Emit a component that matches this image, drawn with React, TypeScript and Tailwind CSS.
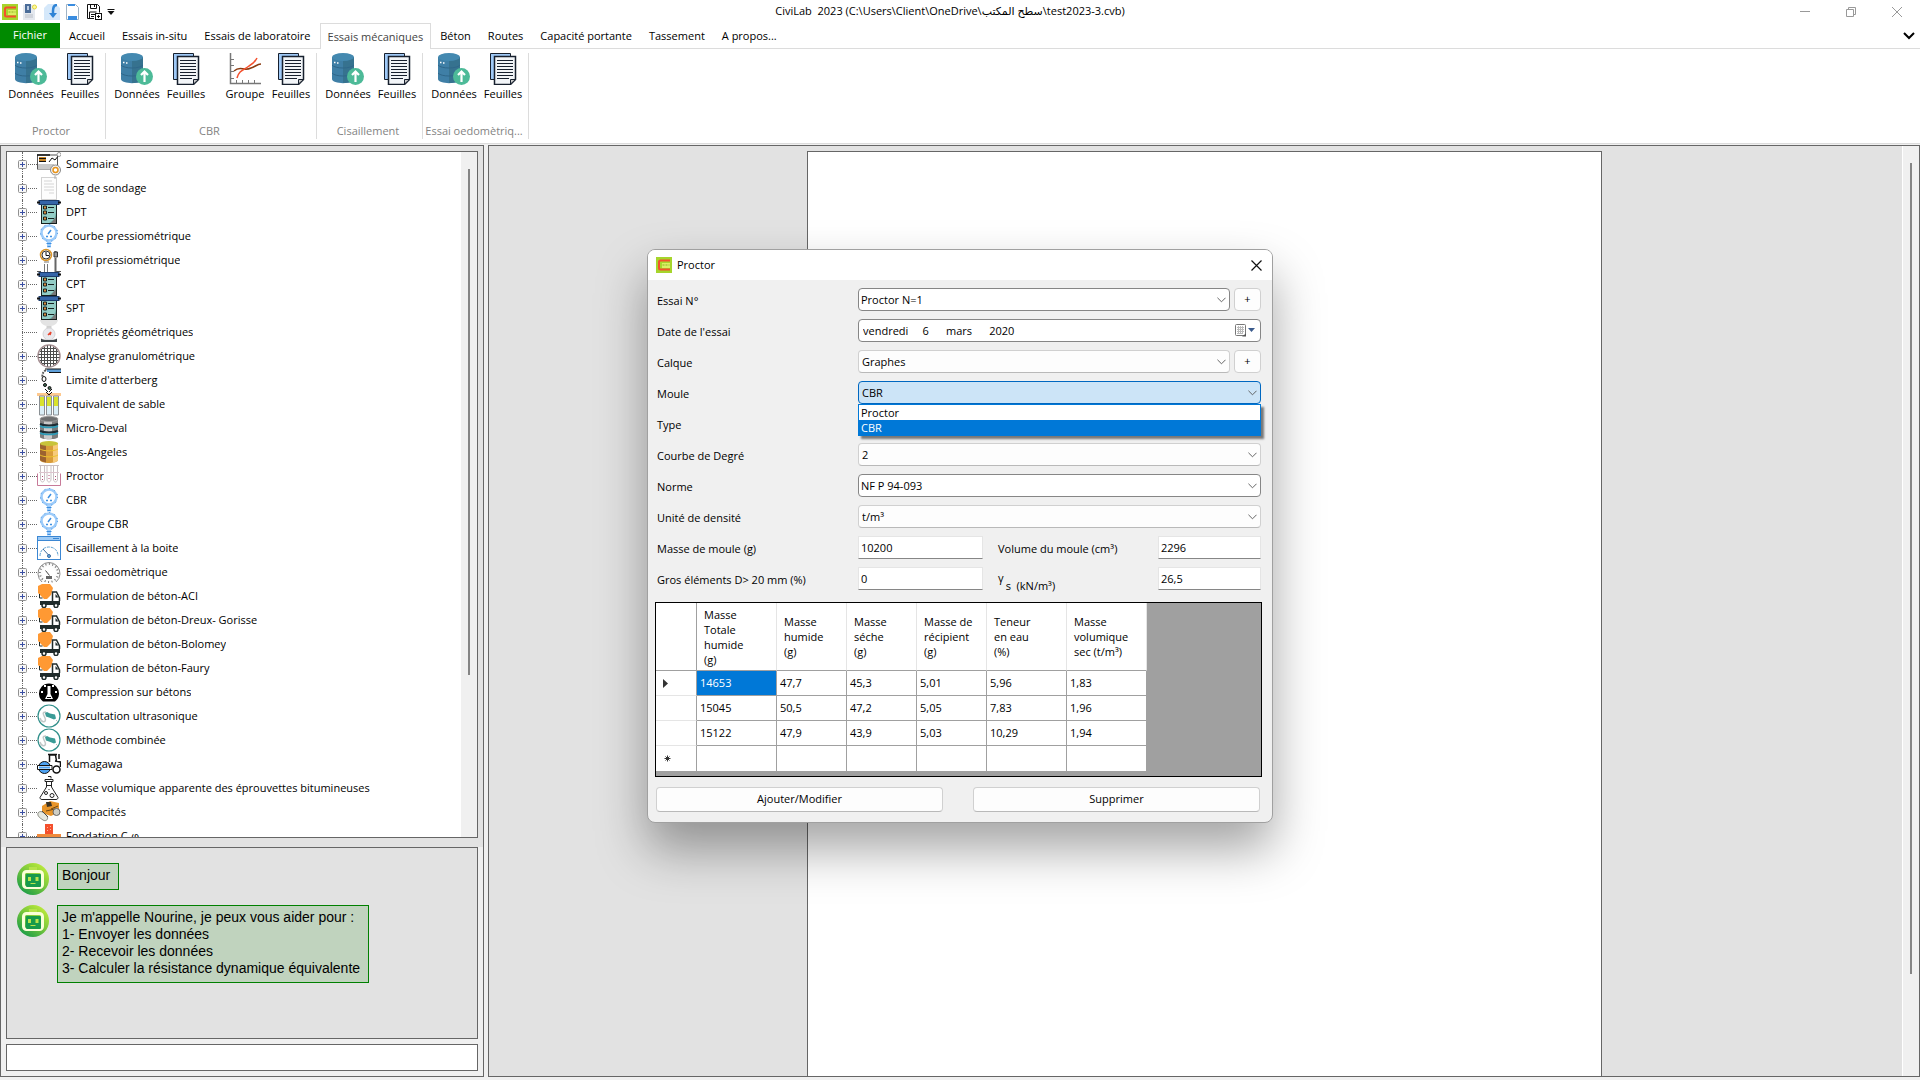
import { useState } from "react";
import type { ReactElement, ReactNode } from "react";

type IconName =
  | "summary"
  | "log"
  | "probe"
  | "gauge"
  | "profile"
  | "scale"
  | "sieve"
  | "tap"
  | "tubes"
  | "drum"
  | "barrel"
  | "rack"
  | "window"
  | "dial"
  | "truck"
  | "press"
  | "ultrasonic"
  | "roller"
  | "flask"
  | "compactor"
  | "footing";

interface TreeEntry {
  label: string;
  icon: IconName;
  leaf?: boolean;
}

const TREE: TreeEntry[] = [
  { label: "Sommaire", icon: "summary" },
  { label: "Log de sondage", icon: "log" },
  { label: "DPT", icon: "probe" },
  { label: "Courbe pressiométrique", icon: "gauge" },
  { label: "Profil pressiométrique", icon: "profile" },
  { label: "CPT", icon: "probe" },
  { label: "SPT", icon: "probe" },
  { label: "Propriétés géométriques", icon: "scale", leaf: true },
  { label: "Analyse granulométrique", icon: "sieve" },
  { label: "Limite d'atterberg", icon: "tap" },
  { label: "Equivalent de sable", icon: "tubes" },
  { label: "Micro-Deval", icon: "drum" },
  { label: "Los-Angeles", icon: "barrel" },
  { label: "Proctor", icon: "rack" },
  { label: "CBR", icon: "gauge" },
  { label: "Groupe CBR", icon: "gauge" },
  { label: "Cisaillement à la boite", icon: "window" },
  { label: "Essai oedomètrique", icon: "dial" },
  { label: "Formulation de béton-ACI", icon: "truck" },
  { label: "Formulation de béton-Dreux- Gorisse", icon: "truck" },
  { label: "Formulation de béton-Bolomey", icon: "truck" },
  { label: "Formulation de béton-Faury", icon: "truck" },
  { label: "Compression sur bétons", icon: "press" },
  { label: "Auscultation ultrasonique", icon: "ultrasonic" },
  { label: "Méthode combinée", icon: "ultrasonic" },
  { label: "Kumagawa", icon: "roller" },
  { label: "Masse volumique apparente des éprouvettes bitumineuses", icon: "flask" },
  { label: "Compacités", icon: "compactor" },
  { label: "Fondation C-φ", icon: "footing" },
];

const TABS = [
  "Accueil",
  "Essais in-situ",
  "Essais de laboratoire",
  "Essais mécaniques",
  "Béton",
  "Routes",
  "Capacité portante",
  "Tassement",
  "A propos...",
];

const COLUMNS = [
  "Masse\nTotale\nhumide\n(g)",
  "Masse\nhumide\n(g)",
  "Masse\nséche\n(g)",
  "Masse de\nrécipient\n(g)",
  "Teneur\nen eau\n(%)",
  "Masse\nvolumique\nsec (t/m³)",
];

const ROWS = [
  ["14653", "47,7", "45,3", "5,01", "5,96", "1,83"],
  ["15045", "50,5", "47,2", "5,05", "7,83", "1,96"],
  ["15122", "47,9", "43,9", "5,03", "10,29", "1,94"],
];

const ICONS: Record<IconName, ReactNode> = {
  summary: (
    <>
      <rect x="0.5" y="3" width="20" height="14" fill="#fff" stroke="#555" />
      <path d="M0 3h13" stroke="#111" strokeWidth="1.5" />
      <path d="M2 5h7v5h-7z" fill="#c98524" />
      <path d="M2 6.5h7M2 9.5h7" stroke="#111" />
      <path d="M1 12h16v5h-16z" fill="#c9c9c9" />
      <path d="M12 10l3-4 3 2 4-5" fill="none" stroke="#111" />
      <circle cx="22" cy="2.500" r="2" fill="#fff" stroke="#999" />
      <circle cx="18.500" cy="18" r="5" fill="#f3f3f3" stroke="#888" />
      <circle cx="18.500" cy="18" r="2.500" fill="#fff" stroke="#e8941a" strokeWidth="1.500" />
    </>
  ),
  log: (
    <>
      <rect x="4.500" y="1.500" width="15" height="22" fill="#fdfdfd" stroke="#d2d2d2" />
      <path d="M7 5h8M7 8h10M7 11h10M7 14h10M12 17h5" stroke="#d5d5d5" />
      <path d="M18 0v3" stroke="#aaa" />
    </>
  ),
  probe: (
    <>
      <rect x="4.500" y="4" width="15" height="19.500" fill="#93cdc6" stroke="#16201f" />
      <path d="M12 23c6-3 7-8 7-13v13z" fill="#68a9a2" />
      <path d="M14 23h5v-6z" fill="#777" />
      <rect x="2" y="0.500" width="20" height="4" fill="#3565a8" stroke="#1d3d6e" />
      <path d="M0 2.500h3M21 2.500h3" stroke="#111" strokeWidth="2" />
      <path d="M11 7.500h6M11 12.500h6M11 18.500h6" stroke="#16201f" />
      <path d="M6.500 6h3v3h-3zM6.500 11h3v3h-3zM6.500 17h3v3h-3z" fill="#d98b3d" stroke="#16201f" />
    </>
  ),
  gauge: (
    <>
      <circle cx="12" cy="9" r="7.500" fill="#fff" stroke="#9ccbfa" strokeWidth="2.500" />
      <circle cx="12" cy="9" r="8.500" fill="none" stroke="#3d8fe0" strokeDasharray="1 4" />
      <path d="M11 10l3-4M9 12.500h2M13 12.500h2" stroke="#3d8fe0" strokeWidth="1.500" />
      <path d="M12 17.500v6" stroke="#9ccbfa" strokeWidth="4" />
      <path d="M9.500 19.500h5M10.500 22.500h3" stroke="#3d8fe0" />
    </>
  ),
  profile: (
    <>
      <circle cx="9" cy="7" r="5.500" fill="#fff" stroke="#d99428" strokeWidth="1.500" />
      <circle cx="9" cy="7" r="4" fill="none" stroke="#333" />
      <path d="M9 4v3.500h3" fill="none" stroke="#111" />
      <path d="M7 14h5M7.500 16v8M10.500 16v8" stroke="#777" />
      <path d="M18.500 3v4M18.500 10v14" stroke="#666" strokeWidth="2" />
      <path d="M17 4h3.500v5h-3.500z" fill="#999" stroke="#333" />
      <path d="M0 23.500h4M19 23.500h5" stroke="#555" />
    </>
  ),
  scale: (
    <>
      <path d="M3 0h18c-1 4-4 6-9 6s-8-2-9-6z" fill="#e3e3e3" />
      <path d="M9.500 6h5v3h-5z" fill="#cfcfcf" />
      <circle cx="12" cy="14" r="6" fill="#e9e9ed" stroke="#d5d5d8" />
      <path d="M11 15l3-3M13 15l1-3" stroke="#e8442e" strokeWidth="1.500" />
      <path d="M4 18.500c3 2 13 2 16 0v3.500h-16z" fill="#3d4247" />
    </>
  ),
  sieve: (
    <>
      <circle cx="12" cy="12" r="11" fill="#fff" stroke="#a58f92" strokeWidth="1.500" />
      <path d="M4.500 5v14M7.500 3v18M10.500 1.500v21M13.500 1.500v21M16.500 3v18M19.500 5v14M5 4.500h14M3 7.500h18M1.500 10.500h21M1.500 13.500h21M3 16.500h18M5 19.500h14" stroke="#4d4d4d" />
    </>
  ),
  tap: (
    <>
      <path d="M10 2.500h14" stroke="#5f9fd8" strokeWidth="3" />
      <path d="M8 1h16M12 4.500h12" stroke="#111" />
      <path d="M9 2c-3 2-4 4-3.500 7" fill="none" stroke="#555" strokeWidth="2" strokeDasharray="2 1" />
      <ellipse cx="7" cy="11" rx="2" ry="2.500" fill="#fff" stroke="#111" />
      <circle cx="8" cy="17" r="1.500" fill="#3f6b52" stroke="#111" />
      <circle cx="12.500" cy="20" r="1.500" fill="#3f6b52" stroke="#111" />
      <path d="M8 21l3 3M12 24l3-3" stroke="#111" />
    </>
  ),
  tubes: (
    <>
      <path d="M0 1h24v3h-24z" fill="#ffc98e" />
      <path d="M2.500 4v19h5v-19zM9.500 4v19h5v-19zM16.500 4v19h5v-19z" fill="#d9eef7" stroke="#8a9094" />
      <path d="M3 5h4v9h-4zM10 5h4v9h-4zM17 5h4v9h-4z" fill="#d8e22c" />
      <path d="M9 0l3 3 3-3" fill="none" stroke="#111" />
    </>
  ),
  drum: (
    <>
      <path d="M3 3v18c0 3 18 3 18 0v-18z" fill="#7d7d7d" />
      <path d="M7 3v19.500c3 1 6 1 8 0v-19.500z" fill="#c9c9c9" />
      <ellipse cx="12" cy="3" rx="9" ry="2.500" fill="#6d6f70" stroke="#999" />
      <path d="M3 8c4 2 14 2 18 0M3 15c4 2 14 2 18 0" fill="none" stroke="#1f2c33" strokeWidth="2" />
      <path d="M3 10c4 2 14 2 18 0M3 17c4 2 14 2 18 0" fill="none" stroke="#2d9cb8" strokeWidth="1.500" />
    </>
  ),
  barrel: (
    <>
      <path d="M3 3v17c0 4 18 4 18 0v-17z" fill="#d99c3a" />
      <path d="M3 3v17c1 1 3 2 6 2.500v-19.500z" fill="#9c6330" />
      <path d="M16 4v18.500c3-.5 5-1.500 5-2.500v-17z" fill="#f7cb7b" />
      <ellipse cx="12" cy="3.500" rx="9" ry="2.500" fill="#c8c33a" />
      <path d="M3 9c4 2.500 14 2.500 18 0M3 15c4 2.500 14 2.500 18 0" fill="none" stroke="#ecc32e" />
    </>
  ),
  rack: (
    <>
      <path d="M3.500 1v14c0 4 4 4 4 0v-14M10 1v14c0 4 4 4 4 0v-14M16.500 1v14c0 4 4 4 4 0v-14M2 1.500h20" fill="none" stroke="#c9c0c4" />
      <path d="M2 8.500h20" stroke="#dcc3cd" />
      <path d="M0.500 9.500v12h23v-12" fill="none" stroke="#c77a99" />
      <path d="M5.500 12v4M12 11v4M18.500 12v4" stroke="#b34d76" strokeDasharray="1 2" />
    </>
  ),
  window: (
    <>
      <rect x="0.500" y="0.500" width="23" height="23" fill="#fff" stroke="#3b87d3" />
      <path d="M1 1h22v4h-22z" fill="#9fcbf5" />
      <path d="M1 4.500h22M16 2.500h6" stroke="#3b87d3" />
      <path d="M3 20c0-12 18-12 18 0" fill="none" stroke="#5b9ecf" strokeDasharray="3 1" />
      <path d="M6 13l6 6.500" stroke="#3b6b9e" />
      <circle cx="12" cy="20" r="1.500" fill="#6aaee8" stroke="#3b6b9e" />
    </>
  ),
  dial: (
    <>
      <path d="M5 22a11 11 0 1 1 14 0" fill="#fbfbfb" stroke="#8a8a8a" />
      <circle cx="12" cy="13" r="9" fill="none" stroke="#777" strokeWidth="2" strokeDasharray="1 2.500" />
      <circle cx="12" cy="13" r="6.500" fill="#fff" />
      <path d="M8.500 10.500l4 5" stroke="#444" />
      <path d="M9 16h6v3h-6z" fill="#666" />
    </>
  ),
  truck: (
    <>
      <path d="M1 2l4-2h8l3 4-2 7-4 4h-3l-6-6z" fill="#ff9933" />
      <path d="M2.500 10v4h3" fill="none" stroke="#1f2b2b" />
      <path d="M3 17h20v4h-20z" fill="#1f2b2b" />
      <path d="M15.500 17v-9h4l3 6v3" fill="#fff" stroke="#1f2b2b" strokeWidth="1.500" />
      <path d="M18.500 10v3.500h3z" fill="#1f2b2b" />
      <circle cx="7" cy="21.500" r="2" fill="#fff" stroke="#1f2b2b" strokeWidth="1.500" />
      <circle cx="19" cy="21.500" r="2" fill="#fff" stroke="#1f2b2b" strokeWidth="1.500" />
    </>
  ),
  press: (
    <>
      <path d="M6 21.500a10 10 0 1 1 12 0z" fill="#000" />
      <path d="M10.500 6h3v8l2.500 5h-8l2.500-5z" fill="#fff" />
      <path d="M7 5h2v2h-2zM15 5h2v2h-2zM4 11h2v2h-2zM18 11h2v2h-2z" fill="#fff" />
      <path d="M10 17.500h4" stroke="#000" />
    </>
  ),
  ultrasonic: (
    <>
      <circle cx="12" cy="12" r="11" fill="#fff" stroke="#2f8f8a" strokeWidth="1.200" />
      <path d="M3 14c2 6 7 4 5 0s-3-6 1-6" fill="none" stroke="#c2c8c8" strokeWidth="1.500" />
      <path d="M8 9l2-1 3 1.500 5 1 1 4-2 1-5-2-3-1z" fill="#3a9b96" />
      <path d="M19 16l2 2" stroke="#bbb" />
    </>
  ),
  roller: (
    <>
      <circle cx="7.500" cy="15.500" r="6" fill="#4da2f2" stroke="#111" />
      <path d="M0.500 13.500h14.500v4h-14.500z" fill="#fff" stroke="#111" />
      <path d="M2 15.500h11" stroke="#4da2f2" strokeWidth="2" />
      <path d="M12.500 10v-7h6l1 6M18 9l5.500 1v5M11 2.500h9" fill="none" stroke="#111" strokeWidth="1.500" />
      <path d="M22 2v5" stroke="#111" strokeWidth="1.500" />
      <circle cx="19.500" cy="17.500" r="3.500" fill="#fff" stroke="#111" strokeWidth="1.500" />
    </>
  ),
  flask: (
    <>
      <path d="M11 0.500h3v2M8 3.500h8v2h-8zM9.500 6v5l-6.500 10.500c0 1 .5 2 2 2h14c1.500 0 2-1 2-2l-6.500-10.500v-5" fill="none" stroke="#222" />
      <circle cx="9" cy="17" r="1.500" fill="none" stroke="#222" />
      <circle cx="15" cy="19.500" r="2" fill="none" stroke="#222" />
      <path d="M9 9.500h6M12 13v1" stroke="#222" />
    </>
  ),
  compactor: (
    <>
      <path d="M5 6l8-5 9 2v9l-8 4-9-3z" fill="#e8952a" />
      <path d="M9 2l5 0 1 4-5 1z" fill="#3a3326" />
      <path d="M14 9l7-3M9 11l9-2" stroke="#6b4511" />
      <circle cx="19.500" cy="12" r="3.500" fill="#cfcfc6" stroke="#666" />
      <path d="M1 13c2-3 6-1 9 3 2 3-1 6-4 4s-6-4-5-7z" fill="#e6e8e0" stroke="#8d8f87" />
      <path d="M5 11l6 6" stroke="#4b4b45" />
    </>
  ),
  footing: (
    <>
      <path d="M8 0h8v10h-8z" fill="#f4502d" />
      <path d="M0 10h24v4h-24z" fill="#f08a3c" />
      <path d="M10.500 3v6M13.500 2v6" stroke="#ffb199" strokeDasharray="1 2" />
    </>
  ),
};

const LogoIcon = ({ className }: { className: string }): ReactElement => (
  <svg viewBox="0 0 16 16" className={className} aria-hidden="true">
    <rect width="16" height="16" fill="#a6d52c" />
    <path d="M6 6h8v5h-8z" fill="#d9ef63" />
    <path d="M14 3.500h-9.500c-1 0-1.500.5-1.500 1.500v6c0 1 .5 1.500 1.500 1.500h9.500" fill="none" stroke="#f4502d" strokeWidth="2" />
    <path d="M6.500 8h7" stroke="#b5cf45" strokeDasharray="2 1" strokeWidth="2" />
  </svg>
);

const DataIcon = (): ReactElement => (
  <svg viewBox="0 0 32 32" className="size-8" aria-hidden="true">
    <path d="M0 4v22c0 5.500 22 5.500 22 0v-22z" fill="#3f7fa6" />
    <path d="M11 7v23c6 0 11-1.500 11-4v-22z" fill="#36728f" />
    <ellipse cx="11" cy="4" rx="11" ry="4" fill="#4489b0" />
    <path d="M0 12c3 4 19 4 22 0M0 20c3 4 19 4 22 0" fill="none" stroke="#2f678a" />
    <path d="M2 9.500h1.500M5 10h1.500" stroke="#fff" strokeWidth="1.500" />
    <circle cx="23.500" cy="23.500" r="8.500" fill="#4dba98" />
    <path d="M23.500 29v-9M20 22l3.500-3.500 3.500 3.500" fill="none" stroke="#fff" strokeWidth="2.200" />
  </svg>
);

const SheetsIcon = (): ReactElement => (
  <svg viewBox="0 0 32 32" className="size-8" aria-hidden="true">
    <path d="M3.500 0.500h20v26h-20z" fill="#9fc9f7" stroke="#17202e" />
    <path d="M7.500 3.500h21v23l-5 5h-16z" fill="#f2f5f8" stroke="#17202e" strokeWidth="1.500" />
    <path d="M10 7.500h16M10 10.500h16M10 13.500h16M10 16.500h16M10 19.500h16M10 22.500h16M10 25.500h12" stroke="#17202e" strokeWidth="1.200" />
    <path d="M23.500 31v-4.500h5z" fill="#ccc" stroke="#17202e" />
  </svg>
);

const CurvesIcon = (): ReactElement => (
  <svg viewBox="0 0 32 32" className="size-8" aria-hidden="true">
    <path d="M1.500 0v30.500h30.500" fill="none" stroke="#777" strokeWidth="1.500" />
    <path d="M2 6.500h3M2 12.500h3M2 18.500h3M2 25.500h3M7.500 30v-3M13.500 30v-3M19.500 30v-3M25.500 30v-3" stroke="#777" />
    <path d="M5 18c7-6 9 1 17-3 4-1 6-4 10-4" fill="none" stroke="#8a3a10" strokeWidth="1.500" />
    <path d="M8 25c2-8 7-8 12-12 4-2 6-4 8-8" fill="none" stroke="#f4502d" strokeWidth="1.500" />
  </svg>
);

const BotIcon = (): ReactElement => (
  <svg viewBox="0 0 32 32" className="size-8 shrink-0" aria-hidden="true">
    <defs>
      <linearGradient id="bot" x1="1" y1="0" x2="0.200" y2="1">
        <stop offset="0" stopColor="#d2f53c" />
        <stop offset="0.500" stopColor="#7cc93a" />
        <stop offset="1" stopColor="#159a48" />
      </linearGradient>
    </defs>
    <circle cx="16" cy="16" r="16" fill="url(#bot)" />
    <path d="M12 4h8v3h-8z" fill="#b6e34a" />
    <rect x="6.500" y="8.500" width="19" height="16" rx="3" fill="none" stroke="#fbffd8" strokeWidth="3" />
    <rect x="9" y="11" width="15" height="13" rx="1" fill="#179a4b" />
    <path d="M11 14h3v4h-3zM18.500 14h3v4h-3z" fill="#b8e34b" />
    <path d="M13.500 20.500h5" stroke="#b8e34b" />
  </svg>
);

const Chevron = (): ReactElement => (
  <svg viewBox="0 0 10 6" className="pointer-events-none absolute top-[9px] right-1 h-[6px] w-[9px]" aria-hidden="true">
    <path d="M0.500 0.500l4.500 4.500 4.500-4.500" fill="none" stroke="#555" />
  </svg>
);

const FIELD = "h-[23px] w-full appearance-none rounded-sm border leading-5 outline-none";

function Combo({ id, value, tone = "light" }: { id: string; value: string; tone?: "light" | "edit" | "open" }): ReactElement {
  const tones = {
    light: "border-[#d0d0d0] border-b-[#b9b9b9] bg-[#fdfdfd] px-[3px]",
    edit: "border-[#868686] bg-white px-[2px]",
    open: "border-[#0067c0] bg-[#cce4f7] px-[3px]",
  };
  return (
    <div className="relative min-w-0 flex-1">
      <select id={id} className={`${FIELD} ${tones[tone]}`} defaultValue={value}>
        <option>{value}</option>
      </select>
      <Chevron />
    </div>
  );
}

function Row({ id, label, children }: { id: string; label: string; children: ReactNode }): ReactElement {
  return (
    <div className="flex h-[31px] items-start">
      <label htmlFor={id} className="w-[201px] shrink-0 leading-[25px]">
        {label}
      </label>
      <div className="relative flex min-w-0 flex-1 gap-1">{children}</div>
    </div>
  );
}

const AddButton = ({ label }: { label: string }): ReactElement => (
  <button type="button" aria-label={label} className="h-[23px] w-[27px] rounded border border-[#d0d0d0] bg-[#fdfdfd]">
    +
  </button>
);

const TEXTBOX = "h-[23px] border border-[#e5e5e5] border-b-[#868686] bg-white px-[2px] outline-none";

function ProctorDialog(): ReactElement {
  const [moule, setMoule] = useState("CBR");

  return (
    <section
      role="dialog"
      aria-label="Proctor"
      className="absolute top-[249px] left-1/2 w-[626px] -translate-x-1/2 overflow-hidden rounded-lg border border-[#a0a0a0] bg-[#f0f0f0] shadow-[0_26px_50px_rgba(0,0,0,0.36)]"
    >
      <header className="flex h-[30px] items-center gap-[5px] bg-white pr-[6px] pl-2">
        <LogoIcon className="size-4" />
        <h2 className="flex-1">Proctor</h2>
        <button type="button" aria-label="Fermer" className="p-1">
          <svg viewBox="0 0 11 11" className="size-[11px]" aria-hidden="true">
            <path d="M0.500 0.500l10 10M10.500 0.500l-10 10" stroke="#111" strokeWidth="1.200" />
          </svg>
        </button>
      </header>

      <div className="pt-2 pr-[11px] pl-[9px]">
        <Row id="essai" label="Essai N°">
          <Combo id="essai" value="Proctor N=1" tone="edit" />
          <AddButton label="Ajouter un essai" />
        </Row>
        <Row id="date" label="Date de l'essai">
          <input
            id="date"
            type="text"
            className={`${FIELD} border-[#868686] bg-white px-1`}
            defaultValue={"vendredi\u00a0\u00a0\u00a0\u00a0\u00a06\u00a0\u00a0\u00a0\u00a0\u00a0\u00a0mars\u00a0\u00a0\u00a0\u00a0\u00a0\u00a02020"}
          />
          <svg viewBox="0 0 20 13" className="pointer-events-none absolute top-[5px] right-[6px] h-[13px] w-5" aria-hidden="true">
            <rect x="0.500" y="0.500" width="10" height="11" rx="1" fill="#fff" stroke="#777" />
            <path d="M2 3.500h7M2 5.500h7M2 7.500h7M2 9.500h5M3.500 2v8M5.500 2v8M7.500 2v8" stroke="#bbb" />
            <path d="M7 12.500l4-3v3z" fill="#555" />
            <path d="M13 4h7l-3.500 4z" fill="#3a5a8c" />
          </svg>
        </Row>
        <Row id="calque" label="Calque">
          <Combo id="calque" value="Graphes" />
          <AddButton label="Ajouter un calque" />
        </Row>
        <Row id="moule" label="Moule">
          <Combo id="moule" value={moule} tone="open" key={moule} />
          <ul
            role="listbox"
            aria-label="Moule"
            className="absolute top-[23px] right-0 left-0 z-10 border border-[#0078d7] bg-white shadow-[3px_3px_2px_rgba(0,0,0,0.5)]"
          >
            {["Proctor", "CBR"].map((name) => (
              <li
                key={name}
                role="option"
                aria-selected={name === moule}
                onClick={() => setMoule(name)}
                className={name === moule ? "bg-[#0078d7] px-[2px] leading-[15px] text-white" : "px-[2px] leading-[15px]"}
              >
                {name}
              </li>
            ))}
          </ul>
        </Row>
        <Row id="type" label="Type">
          <Combo id="type" value="" />
        </Row>
        <Row id="degre" label="Courbe de Degré">
          <Combo id="degre" value="2" />
        </Row>
        <Row id="norme" label="Norme">
          <Combo id="norme" value="NF P 94-093" tone="edit" />
        </Row>
        <Row id="unite" label="Unité de densité">
          <Combo id="unite" value="t/m³" />
        </Row>
        <Row id="masse" label="Masse de moule (g)">
          <input id="masse" className={`${TEXTBOX} w-[125px]`} defaultValue="10200" />
          <label htmlFor="volume" className="ml-[11px] flex-1 leading-[25px]">
            Volume du moule (cm³)
          </label>
          <input id="volume" className={`${TEXTBOX} w-[103px]`} defaultValue="2296" />
        </Row>
        <Row id="gros" label="Gros éléments D> 20 mm (%)">
          <input id="gros" className={`${TEXTBOX} w-[125px]`} defaultValue="0" />
          <label htmlFor="gamma" className="ml-[11px] flex flex-1 gap-[2px] leading-[22px]">
            <span>γ</span>
            <span className="whitespace-pre pt-2">s  (kN/m³)</span>
          </label>
          <input id="gamma" className={`${TEXTBOX} w-[103px]`} defaultValue="26,5" />
        </Row>
      </div>

      <div className="mt-1 mr-[10px] ml-[7px] h-[175px] border border-black bg-[#a0a0a0]">
        <table className="w-[491px] table-fixed border-separate border-spacing-0 bg-white text-left">
          <colgroup>
            <col className="w-[41px]" />
            <col className="w-20" />
            <col className="w-[70px]" />
            <col className="w-[70px]" />
            <col className="w-[70px]" />
            <col className="w-20" />
            <col className="w-20" />
          </colgroup>
          <thead>
            <tr className="h-[68px]">
              <th aria-label="Sélection" className="border-r border-b border-[#a0a0a0]" />
              {COLUMNS.map((title) => (
                <th
                  key={title}
                  className="border-r border-b border-r-[#e5e5e5] border-b-[#a0a0a0] pl-[7px] leading-[15px] font-normal whitespace-pre-line"
                >
                  {title}
                </th>
              ))}
            </tr>
          </thead>
          <tbody>
            {ROWS.map((row, r) => (
              <tr key={row[0]} className="h-[25px]">
                <th aria-label={`Ligne ${r + 1}`} className="border-r border-b border-r-[#a0a0a0] border-b-[#e5e5e5] pl-[7px]">
                  {r === 0 && (
                    <svg viewBox="0 0 5 9" className="h-[9px] w-[5px]" aria-hidden="true">
                      <path d="M0 0l5 4.500-5 4.500z" fill="#333" />
                    </svg>
                  )}
                </th>
                {row.map((cell, c) => (
                  <td
                    key={c}
                    className={
                      r === 0 && c === 0
                        ? "border-r border-b border-[#a0a0a0] bg-[#0078d7] pl-[3px] text-white"
                        : "border-r border-b border-[#a0a0a0] pl-[3px]"
                    }
                  >
                    {cell}
                  </td>
                ))}
              </tr>
            ))}
            <tr className="h-[25px]">
              <th aria-label="Nouvelle ligne" className="border-r border-[#a0a0a0] pl-2">
                <svg viewBox="0 0 7 7" className="size-[7px]" aria-hidden="true">
                  <path d="M3.500 0.500v6M0.500 3.500h6M1.500 1.500l4 4M5.500 1.500l-4 4" stroke="#333" />
                </svg>
              </th>
              {COLUMNS.map((title) => (
                <td key={title} className="border-r border-[#a0a0a0]" />
              ))}
            </tr>
          </tbody>
        </table>
      </div>

      <footer className="grid grid-cols-2 gap-[30px] pt-[10px] pr-3 pb-[10px] pl-2">
        <button type="button" className="h-[25px] rounded border border-[#d0d0d0] border-b-[#b9b9b9] bg-[#fdfdfd]">
          Ajouter/Modifier
        </button>
        <button type="button" className="h-[25px] rounded border border-[#d0d0d0] border-b-[#b9b9b9] bg-[#fdfdfd]">
          Supprimer
        </button>
      </footer>
    </section>
  );
}

function RibbonGroup({ title, children }: { title: string; children: ReactNode }): ReactElement {
  return (
    <div className="flex flex-col justify-between border-r border-[#dcdcdc]">
      <div className="flex pr-[2px] pl-[5px]">{children}</div>
      <p className="pr-[3px] text-center whitespace-nowrap text-[#838383]">{title}</p>
    </div>
  );
}

function RibbonButton({ kind }: { kind: "data" | "sheets" | "curves" }): ReactElement {
  return (
    <button type="button" className={kind === "data" ? "flex w-[52px] flex-col items-center" : "flex w-[46px] flex-col items-center"}>
      {kind === "data" && <DataIcon />}
      {kind === "sheets" && <SheetsIcon />}
      {kind === "curves" && <CurvesIcon />}
      <span className="leading-[18px]">{kind === "data" ? "Données" : kind === "sheets" ? "Feuilles" : "Groupe"}</span>
    </button>
  );
}

function TitleBar(): ReactElement {
  return (
    <header className="flex h-[23px] items-center bg-white">
      <div className="flex w-[118px] items-center gap-[5px] pl-[2px]">
        <LogoIcon className="size-4" />
        <button type="button" aria-label="Nouveau">
          <svg viewBox="0 0 16 16" className="size-4" aria-hidden="true">
            <path d="M0 1h12v15h-12z" fill="#e4e8ee" />
            <path d="M2 0h6v9h-6z" fill="#4a6c98" />
            <path d="M4 2h2v4h-2z" fill="#b9cbe0" />
            <path d="M2 11h8M2 13h8" stroke="#b9bec6" />
            <circle cx="11.500" cy="3" r="2" fill="#fdf7a0" stroke="#e3d838" />
          </svg>
        </button>
        <button type="button" aria-label="Ouvrir">
          <svg viewBox="0 0 16 16" className="size-4" aria-hidden="true">
            <path d="M0 4l4-4h8l4 4v12h-16z" fill="#d5e8fa" />
            <path d="M13 1c-3 0-4 2-4 6v3" fill="none" stroke="#2f84d6" strokeWidth="2.500" />
            <path d="M5 9h8l-4 5z" fill="#2f84d6" />
          </svg>
        </button>
        <button type="button" aria-label="Fermer le projet">
          <svg viewBox="0 0 16 16" className="size-4" aria-hidden="true">
            <path d="M1.500 0.500h9l3 3v12h-12z" fill="#fff" stroke="#9fb3c5" />
            <path d="M3 0h7v2h-7zM3 12h9v4h-9z" fill="#3a8de0" />
          </svg>
        </button>
        <button type="button" aria-label="Enregistrer">
          <svg viewBox="0 0 16 16" className="size-4" aria-hidden="true">
            <path d="M8 14.500h-6.500v-14h10l2 2v6" fill="#fff" stroke="#111" />
            <path d="M4.500 0.500v4h6v-4M8.500 1v2M3.500 14v-6h7M5 10.500h4M5 12.500h3" fill="none" stroke="#111" />
            <rect x="9.500" y="9.500" width="6" height="6" fill="#fff" stroke="#111" />
            <path d="M12.500 11v3M11 12.500h3" stroke="#111" />
          </svg>
        </button>
        <button type="button" aria-label="Personnaliser">
          <svg viewBox="0 0 8 6" className="h-[6px] w-2" aria-hidden="true">
            <path d="M0.500 0.500h7" stroke="#111" />
            <path d="M0.500 2h7l-3.500 4z" fill="#111" />
          </svg>
        </button>
      </div>
      <h1 className="flex-1 text-center whitespace-pre">CiviLab  2023 (C:\Users\Client\OneDrive\سطح المكتب\test2023-3.cvb)</h1>
      <div className="flex">
        <button type="button" aria-label="Réduire" className="grid h-[23px] w-[46px] place-items-center">
          <svg viewBox="0 0 10 10" className="size-[10px]" aria-hidden="true">
            <path d="M0 4.500h10" stroke="#999" />
          </svg>
        </button>
        <button type="button" aria-label="Restaurer" className="grid h-[23px] w-[46px] place-items-center">
          <svg viewBox="0 0 10 10" className="size-[10px]" aria-hidden="true">
            <path d="M0.500 2.500h7v7h-7zM2.500 2.500v-2h7v7h-2" fill="none" stroke="#999" />
          </svg>
        </button>
        <button type="button" aria-label="Fermer" className="grid h-[23px] w-[46px] place-items-center">
          <svg viewBox="0 0 10 10" className="size-[10px]" aria-hidden="true">
            <path d="M0 0l10 10M10 0l-10 10" stroke="#999" />
          </svg>
        </button>
      </div>
    </header>
  );
}

function ProjectTree(): ReactElement {
  return (
    <div className="flex min-h-0 flex-1 overflow-hidden border border-[#666] bg-white">
      <ul className="min-w-0 flex-1">
        {TREE.map((entry) => (
          <li key={entry.label} className="flex h-6 items-center pl-[11px]">
            <div className="relative flex h-6 w-[19px] items-center">
              <span className="absolute inset-y-0 left-1 border-l border-dotted border-[#666]" />
              <span className="ml-1 w-full border-t border-dotted border-[#666]" />
              {!entry.leaf && (
                <button type="button" aria-label={`Développer ${entry.label}`} className="absolute left-0">
                  <svg viewBox="0 0 9 9" className="size-[9px]" aria-hidden="true">
                    <rect x="0.500" y="0.500" width="8" height="8" rx="1" fill="#f8f8f8" stroke="#919191" />
                    <path d="M2 4.500h5M4.500 2v5" stroke="#3a4fa3" />
                  </svg>
                </button>
              )}
            </div>
            <svg viewBox="0 0 24 24" className="size-6 shrink-0" aria-hidden="true">
              {ICONS[entry.icon]}
            </svg>
            <span className="ml-[5px] truncate">{entry.label}</span>
          </li>
        ))}
      </ul>
      <div className="w-4 bg-[#f0f0f0] pt-[17px]">
        <div className="ml-[7px] h-[506px] w-[2px] bg-[#858585]" />
      </div>
    </div>
  );
}

function ChatPanel(): ReactElement {
  return (
    <div className="flex h-[229px] flex-col gap-[5px] bg-[#f0f0f0] px-[5px] pb-[5px]">
      <div className="flex flex-1 flex-col gap-[10px] border border-[#666] bg-[#e2e2e2] px-[10px] pt-[15px] font-['Liberation_Sans',sans-serif] text-[14px] leading-[17px]">
        <div className="flex items-start gap-2">
          <BotIcon />
          <p className="border border-[#008000] bg-[#c0d3be] pt-[3px] pr-2 pb-[5px] pl-1">Bonjour</p>
        </div>
        <div className="flex items-start gap-2">
          <BotIcon />
          <p className="border border-[#008000] bg-[#c0d3be] pt-[3px] pr-2 pb-[5px] pl-1">
            Je m'appelle Nourine, je peux vous aider pour :<br />
            1- Envoyer les données
            <br />
            2- Recevoir les données
            <br />
            3- Calculer la résistance dynamique équivalente
          </p>
        </div>
      </div>
      <input aria-label="Message" className="h-[27px] border border-[#666] bg-white px-1 outline-none" />
    </div>
  );
}

export default function App(): ReactElement {
  return (
    <div className="relative flex h-screen flex-col overflow-hidden bg-[#f0f0f0] pb-[3px] font-['Open_Sans','DejaVu_Sans',sans-serif] text-[11px] text-black">
      <TitleBar />

      <nav className="flex h-[26px] items-end gap-px border-b border-[#dcdcdc] bg-white">
        <button type="button" className="h-[25px] w-[60px] bg-[#008a00] text-white">
          Fichier
        </button>
        {TABS.map((tab) => (
          <button
            key={tab}
            type="button"
            className={
              tab === "Essais mécaniques"
                ? "-mb-px h-[26px] border border-b-0 border-[#dcdcdc] bg-white px-[7px] pt-px text-[#444]"
                : "h-[25px] px-2 pt-[2px]"
            }
          >
            {tab}
          </button>
        ))}
        <button type="button" aria-label="Réduire le ruban" className="mr-[5px] ml-auto h-[25px]">
          <svg viewBox="0 0 12 8" className="h-2 w-3" aria-hidden="true">
            <path d="M1 1l5 5 5-5" fill="none" stroke="#000" strokeWidth="2" />
          </svg>
        </button>
      </nav>

      <div className="flex h-[95px] border-b border-[#dcdcdc] bg-white pt-1 pb-1">
        <RibbonGroup title="Proctor">
          <RibbonButton kind="data" />
          <RibbonButton kind="sheets" />
        </RibbonGroup>
        <RibbonGroup title="CBR">
          <RibbonButton kind="data" />
          <RibbonButton kind="sheets" />
          <span className="w-[13px]" />
          <RibbonButton kind="curves" />
          <RibbonButton kind="sheets" />
        </RibbonGroup>
        <RibbonGroup title="Cisaillement">
          <RibbonButton kind="data" />
          <RibbonButton kind="sheets" />
        </RibbonGroup>
        <RibbonGroup title="Essai oedomètriq...">
          <RibbonButton kind="data" />
          <RibbonButton kind="sheets" />
        </RibbonGroup>
      </div>

      <main className="flex min-h-0 flex-1 gap-1 pt-px">
        <aside className="flex w-[484px] flex-col border border-[#666] bg-[#e2e2e2]">
          <div className="flex min-h-0 flex-1 flex-col px-[5px] pt-[5px] pb-[9px]">
            <ProjectTree />
          </div>
          <ChatPanel />
        </aside>
        <div className="grid min-w-0 flex-1 grid-cols-[1fr_795px_1fr] border border-[#666] bg-[#e2e2e2]">
          <div />
          <div className="mt-[5px] border border-b-0 border-[#666] bg-white" />
          <div className="w-[17px] justify-self-end border-l border-white bg-[#f0f0f0] pt-[17px]">
            <div className="ml-[7px] h-[811px] w-[2px] bg-[#858585]" />
          </div>
        </div>
      </main>

      <ProctorDialog />
    </div>
  );
}
